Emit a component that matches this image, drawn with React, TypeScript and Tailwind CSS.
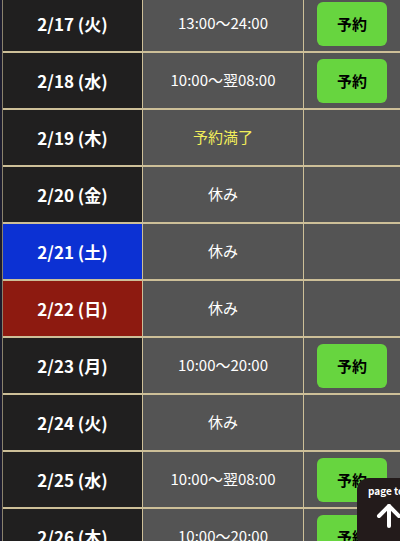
type Day = {
  date: string
  time: string
  tone?: 'sat' | 'sun'
  full?: boolean
  reserve?: boolean
}

const days: Day[] = [
  { date: '2/17 (火)', time: '13:00〜24:00', reserve: true },
  { date: '2/18 (水)', time: '10:00〜翌08:00', reserve: true },
  { date: '2/19 (木)', time: '予約満了', full: true },
  { date: '2/20 (金)', time: '休み' },
  { date: '2/21 (土)', time: '休み', tone: 'sat' },
  { date: '2/22 (日)', time: '休み', tone: 'sun' },
  { date: '2/23 (月)', time: '10:00〜20:00', reserve: true },
  { date: '2/24 (火)', time: '休み' },
  { date: '2/25 (水)', time: '10:00〜翌08:00', reserve: true },
  { date: '2/26 (木)', time: '10:00〜20:00', reserve: true },
]

const font = { fontFamily: '"Noto Sans CJK JP", "Noto Sans", sans-serif' }

export default function App() {
  return (
    <div className="relative w-[400px] h-[541px] overflow-hidden bg-[#1c1c2e]" style={font}>
      <div className="ml-[2px] mt-[-4px] border-l border-[#8a826c]">
        {days.map((d) => (
          <div key={d.date} className="grid grid-cols-[139px_1px_160px_1px_1fr] h-[57px] border-b-2 border-[#cdbf98]">
            <div
              className={`flex items-center justify-center text-white font-bold text-[17px] ${
                d.tone === 'sat' ? 'bg-[#0c31d3]' : d.tone === 'sun' ? 'bg-[#8d1a10]' : 'bg-[#201f1f]'
              }`}
            >
              {d.date}
            </div>
            <div className="bg-[#cdbf98]" />
            <div
              className={`flex items-center justify-center bg-[#545454] text-[15px] ${
                d.full ? 'text-[#f2ee5a]' : 'text-white'
              }`}
            >
              {d.time}
            </div>
            <div className="bg-[#cdbf98]" />
            <div className="flex items-center justify-center bg-[#545454] pt-[1px]">
              {d.reserve && (
                <div className="w-[70px] h-[44px] rounded-[6px] bg-[#67d53f] flex items-center justify-center text-black font-bold text-[15px]">
                  予約
                </div>
              )}
            </div>
          </div>
        ))}
      </div>

      {/* page top */}
      <div className="absolute left-[357px] top-[478px] w-[70px] h-[70px] rounded-xl bg-[#231b1b] flex flex-col items-start pl-[11px] pt-[8px]">
        <div className="text-white text-[10px] font-bold leading-none whitespace-nowrap">page top</div>
        <svg className="mt-[6px] ml-[8px]" width="26" height="26" viewBox="0 0 26 26" fill="none" stroke="white" strokeWidth="4" strokeLinecap="round" strokeLinejoin="round">
          <path d="M13 24V4" />
          <path d="M3 14l10-10 10 10" />
        </svg>
      </div>
    </div>
  )
}
